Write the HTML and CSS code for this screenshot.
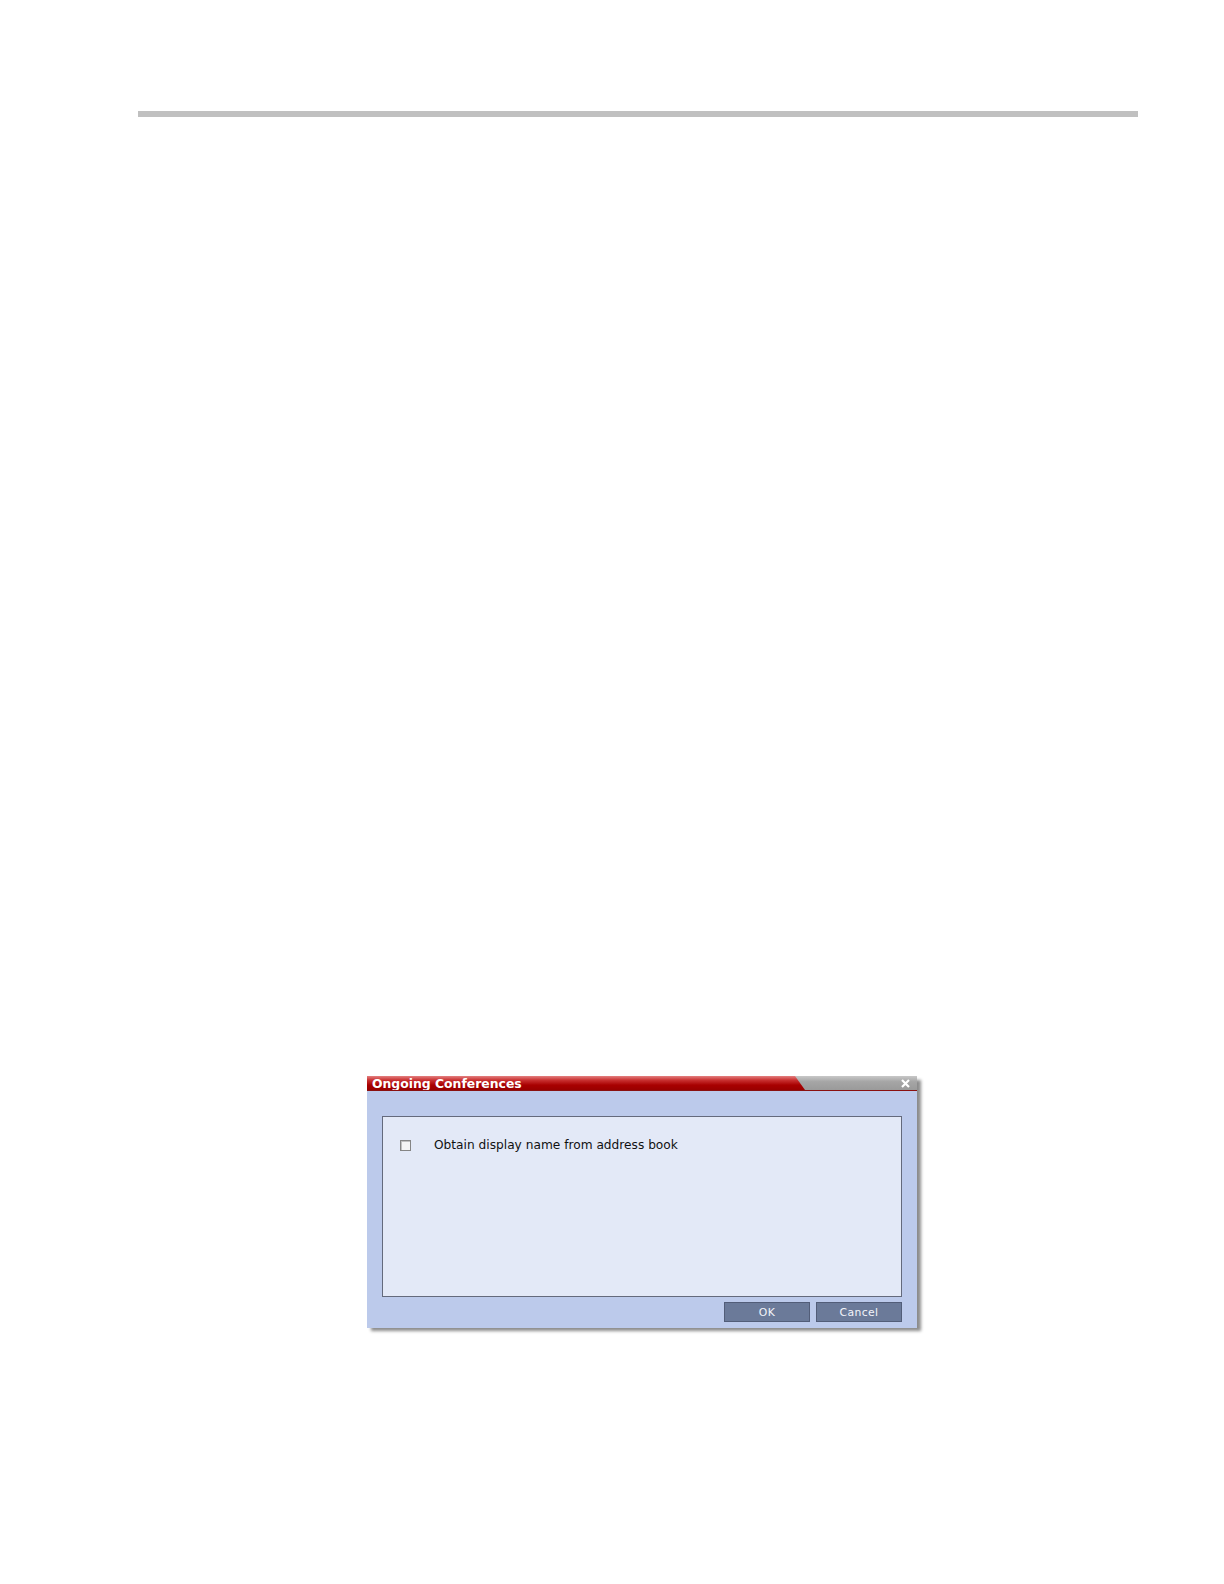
FILE: index.html
```html
<!DOCTYPE html>
<html>
<head>
<meta charset="utf-8">
<link rel="stylesheet" href="styles.css">
</head>
<body>
<div class="page">
  <div class="rule"></div>
  <div class="dialog">
    <div class="titlebar">
      <div class="title-red"><span class="title-text">Ongoing Conferences</span></div>
      <div class="title-gray">
        <svg class="close" width="9" height="9" viewBox="0 0 9 9"><path d="M1 1 L8 8 M8 1 L1 8" stroke="#ffffff" stroke-width="2.2"/></svg>
      </div>
    </div>
    <div class="body">
      <div class="panel">
        <label class="row">
          <span class="checkbox"></span>
          <span class="label">Obtain display name from address book</span>
        </label>
      </div>
      <div class="buttons">
        <button class="btn">OK</button>
        <button class="btn">Cancel</button>
      </div>
    </div>
  </div>
</div>
</body>
</html>
```

FILE: styles.css
```css
html, body {
  margin: 0;
  padding: 0;
  background: #ffffff;
}
.page {
  width: 1224px;
  height: 1584px;
  position: relative;
  overflow: hidden;
}
.rule {
  margin-left: 138px;
  margin-top: 111px;
  width: 1000px;
  height: 6px;
  background: #c0c0c0;
}
.dialog {
  margin-left: 367px;
  margin-top: 959px;
  width: 550px;
  height: 251px;
  display: flex;
  flex-direction: column;
  box-shadow: 4px 4px 3px rgba(0,0,0,0.45);
  font-family: "DejaVu Sans", Verdana, sans-serif;
}
.titlebar {
  height: 14px;
  display: flex;
  border-bottom: 1px solid #8a1010;
}
.title-red {
  width: 438px;
  background: linear-gradient(to bottom, #e48080 0%, #c83030 30%, #a80000 65%, #990000 100%);
  clip-path: polygon(0 0, 428px 0, 438px 100%, 0 100%);
  margin-right: -10px;
  position: relative;
  z-index: 1;
  display: flex;
  align-items: flex-start;
}
.title-text {
  color: #ffffff;
  font-weight: bold;
  font-size: 12.4px;
  line-height: 13px;
  padding-top: 1px;
  padding-left: 5px;
}
.title-gray {
  flex: 1;
  background: linear-gradient(to bottom, #c8c8c8 0%, #a6a6a6 40%, #9a9a9a 100%);
  display: flex;
  justify-content: flex-end;
  align-items: center;
  padding-right: 7px;
}
.close {
  display: block;
}
.body {
  flex: 1;
  background: #bccaeb;
  display: flex;
  flex-direction: column;
  padding: 25px 15px 6px 15px;
}
.panel {
  height: 181px;
  background: #e3e9f7;
  border: 1px solid #646a7c;
  box-sizing: border-box;
  padding-top: 21px;
  padding-left: 17px;
}
.row {
  display: flex;
  align-items: center;
}
.checkbox {
  width: 11px;
  height: 11px;
  box-sizing: border-box;
  border: 1px solid #858585;
  background: #f4f4f4;
  box-shadow: inset 1px 1px 0 #c0c0c0;
}
.label {
  margin-left: 23px;
  font-size: 12.2px;
  color: #111111;
}
.buttons {
  display: flex;
  justify-content: flex-end;
  gap: 6px;
  margin-top: 5px;
}
.btn {
  width: 86px;
  height: 20px;
  background: #6b7a99;
  border: 1px solid #525d78;
  color: #f2f4fa;
  font-family: "DejaVu Sans", Verdana, sans-serif;
  font-size: 10.8px;
  padding: 0;
  letter-spacing: 0.4px;
}
```
